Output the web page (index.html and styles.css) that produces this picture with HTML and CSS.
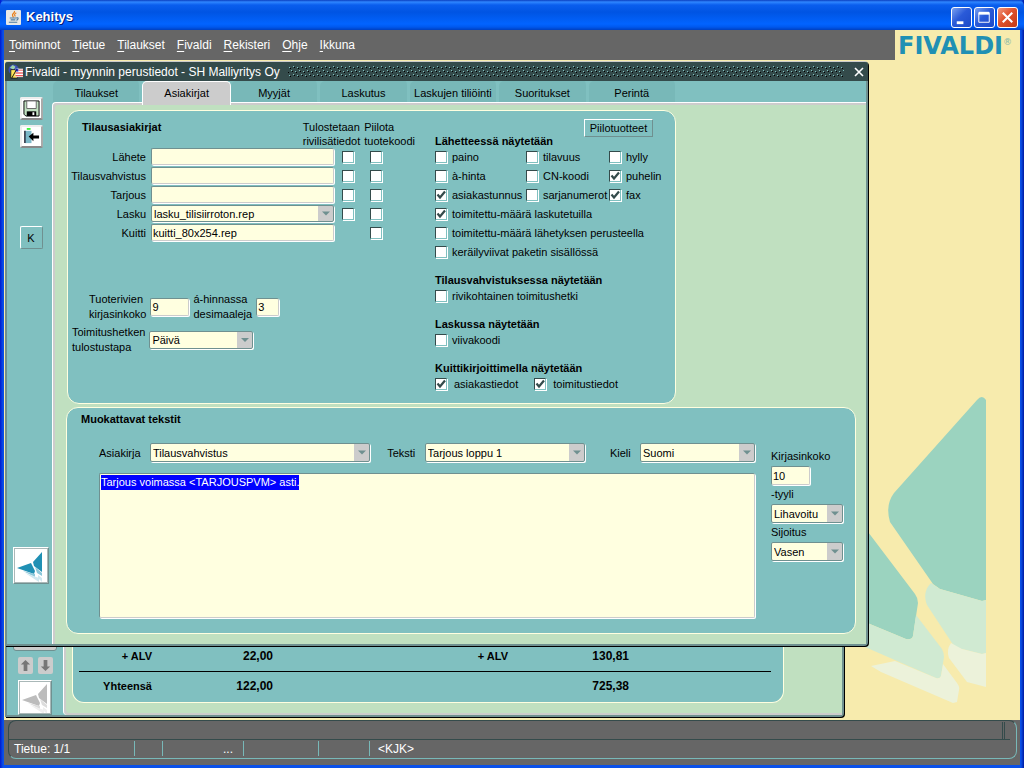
FILE: index.html
```html
<!DOCTYPE html>
<html lang="fi">
<head>
<meta charset="utf-8">
<title>Kehitys</title>
<link rel="stylesheet" href="styles.css">
</head>
<body>
<svg class="defs" aria-hidden="true">
  <symbol id="bird" viewBox="0 0 32 32">
    <path class="wing" d="M27 2v20l-8-6-1-4zM2 18l14-5 4 8-1 3z"/>
    <path class="tail" d="M20 17l7 6v3l-5-3zM8 21l12 3 0 3z"/>
    <path class="tip" d="M23 25l4 3v4l-4-4zM10 23l14 5v4z"/>
  </symbol>
</svg>
<div class="frame">
  <header class="titlebar">
    <svg class="java" viewBox="0 0 16 16" aria-hidden="true">
      <rect width="16" height="16" rx="1" fill="#e8e8e6"/>
      <path d="M9 1c1 2-3 3-2 5l1 2M11 3c-3 2-2 2-1 4" fill="none" stroke="#e8801c" stroke-width="1.3"/>
      <path d="M4 8.500h7M5 10.500h5M3 13h9M11 8.500c3-1 2 2 0 2.500" fill="none" stroke="#4a7aa0" stroke-width="1.200"/>
    </svg>
    <h1>Kehitys</h1>
    <div class="winbtns">
      <button aria-label="Pienennä"><svg viewBox="0 0 20 20"><path d="M5 14h7v3H5z" fill="#fff"/></svg></button>
      <button aria-label="Suurenna"><svg viewBox="0 0 20 20"><path d="M4 5h11v10H4z" fill="none" stroke="#fff"/><path d="M4 4h11v3H4z" fill="#fff"/></svg></button>
      <button class="close" aria-label="Sulje"><svg viewBox="0 0 20 20"><path d="M5 5l10 10M15 5L5 15" stroke="#fff" stroke-width="2.200"/></svg></button>
    </div>
  </header>

  <div class="top">
    <nav class="menu">
      <button><u>T</u>oiminnot</button>
      <button><u>T</u>ietue</button>
      <button><u>T</u>ilaukset</button>
      <button><u>F</u>ivaldi</button>
      <button><u>R</u>ekisteri</button>
      <button><u>O</u>hje</button>
      <button><u>I</u>kkuna</button>
    </nav>
    <div class="brand">FIVALDI<sup>®</sup></div>
  </div>

  <main class="desktop">
    <svg class="backdrop" viewBox="865 390 125 315" aria-hidden="true">
      <path fill="#9bd3bf" d="M986 400q-4-6-9 0L894 493q-9 12-4 29l43 62 7 5 42 12 4-1zM865 528l50 66q3 4 3 9l-5 33q-1 4-7 3l-41-17z"/>
      <path fill="#d0ead2" d="M931 583q-9 9-4 22l25 38q4 5 10 6l20 5 4-1v-53l-4 1-42-12zM865 622l41 17q6 1 7-3l3-21 26 34q2 4 2 8l-3 19q-1 3-5 2l-71-31z"/>
      <path fill="#ecf2da" d="M951 643q-5 7-2 15l18 24 19 5v-34l-4 1-20-5zM871 666l24-5 41 17q4 1 5-2l2-12 14 19q3 4 2 7l-2 12-4 1-72-31z"/>
    </svg>

    <section class="window back">
      <div class="window-body">
        <aside class="side">
          <span class="stub"></span>
          <div class="arrows">
            <button aria-label="Ylös"><svg viewBox="0 0 14 14"><path d="M7 1l5 5H9v7H5V6H2z"/></svg></button>
            <button aria-label="Alas"><svg viewBox="0 0 14 14"><path d="M7 13l5-5H9V1H5v7H2z"/></svg></button>
          </div>
          <button class="bird off" aria-label="Fivaldi"><svg><use href="#bird"/></svg></button>
        </aside>
        <div class="page">
          <div class="totals">
            <table>
              <tr><th>+ ALV</th><td>22,00</td><th>+ ALV</th><td>130,81</td></tr>
              <tr><th>Yhteensä</th><td>122,00</td><th></th><td>725,38</td></tr>
            </table>
          </div>
        </div>
      </div>
    </section>

    <section class="window main">
      <header class="window-title">
        <svg viewBox="0 0 16 16" aria-hidden="true">
          <circle cx="6" cy="6" r="5.500" fill="#3c50b4"/>
          <path d="M2 4l3-3 3 2-2 3zM8 6l3-2v4z" fill="#9fd4aa"/>
          <path d="M3 6h6l1 1v8H3z" fill="#ffe75a" stroke="#111" stroke-width=".800"/>
          <path d="M8 5h8v9H8z" fill="#fff"/>
          <path d="M11 6h5v1h-5zM8 9h8v1H8zM8 12h8v1H8z" fill="#e02020"/>
          <path d="M8 5h3v3H8z" fill="#2030c0"/>
          <path d="M9 6l-5 9" stroke="#111"/>
        </svg>
        <h2>Fivaldi - myynnin perustiedot - SH Malliyritys Oy</h2>
        <span class="grip"></span>
        <button aria-label="Sulje"><svg viewBox="0 0 10 10"><path d="M1 1l8 8M9 1L1 9" stroke="#fff" stroke-width="1.600"/></svg></button>
      </header>
      <div class="window-body">
        <aside class="side">
          <button class="tool" aria-label="Tallenna"><svg viewBox="0 0 18 18"><path d="M1 1h16v16H3l-2-2z" fill="#c0e0c0" stroke="#000"/><path d="M4 1h10v8H4z" fill="#fff" stroke="#666"/><path d="M4 12h10v5H4z" fill="#000"/><path d="M10 13h2v3h-2z" fill="#fff"/></svg></button>
          <button class="tool" aria-label="Poistu"><svg viewBox="0 0 18 18"><path d="M2 3h7v13H2z" fill="#7cb8c8"/><path d="M2 3v13" stroke="#223" stroke-width="1.500"/><path d="M4 1h4" stroke="#0e0" stroke-width="1.500"/><path d="M6 9l5-4v3h6v3h-6v3z" fill="#000"/></svg></button>
          <button class="tool flat">K</button>
          <button class="bird" aria-label="Fivaldi"><svg><use href="#bird"/></svg></button>
        </aside>
        <div class="content">
          <div class="tabs" role="tablist">
            <button role="tab">Tilaukset</button>
            <button role="tab" class="active" aria-selected="true">Asiakirjat</button>
            <button role="tab">Myyjät</button>
            <button role="tab">Laskutus</button>
            <button role="tab">Laskujen tiliöinti</button>
            <button role="tab">Suoritukset</button>
            <button role="tab">Perintä</button>
          </div>
          <div class="page">
            <form class="panel docs">
              <div class="left">
                <div class="head">
                  <h3>Tilausasiakirjat</h3>
                  <span id="h-rivi">Tulostetaan<br>rivilisätiedot</span>
                  <span id="h-koodi">Piilota<br>tuotekoodi</span>
                </div>
                <div class="rows">
                  <label for="lahete">Lähete</label><input type="text" id="lahete">
                  <input type="checkbox" aria-labelledby="h-rivi"><input type="checkbox" aria-labelledby="h-koodi">
                  <label for="vahvistus">Tilausvahvistus</label><input type="text" id="vahvistus">
                  <input type="checkbox" aria-labelledby="h-rivi"><input type="checkbox" aria-labelledby="h-koodi">
                  <label for="tarjous">Tarjous</label><input type="text" id="tarjous">
                  <input type="checkbox" aria-labelledby="h-rivi"><input type="checkbox" aria-labelledby="h-koodi">
                  <label for="lasku">Lasku</label><select id="lasku"><option>lasku_tilisiirroton.rep</option></select>
                  <input type="checkbox" aria-labelledby="h-rivi"><input type="checkbox" aria-labelledby="h-koodi">
                  <label for="kuitti">Kuitti</label><input type="text" id="kuitti" value="kuitti_80x254.rep">
                  <span></span><input type="checkbox" aria-labelledby="h-koodi">
                </div>
                <div class="extra">
                  <label for="koko">Tuoterivien<br>kirjasinkoko</label><input type="text" id="koko" class="w-m" value="9">
                  <label for="desim">á-hinnassa<br>desimaaleja</label><input type="text" id="desim" class="w-s" value="3">
                </div>
                <div class="extra">
                  <label for="tapa">Toimitushetken<br>tulostustapa</label><select id="tapa" class="w-l"><option>Päivä</option></select>
                </div>
              </div>
              <div class="right">
                <button type="button" class="hidden-products">Piilotuotteet</button>
                <fieldset>
                  <legend>Lähetteessä näytetään</legend>
                  <div class="three">
                    <label><input type="checkbox">paino</label><label><input type="checkbox">tilavuus</label><label><input type="checkbox">hylly</label>
                    <label><input type="checkbox">à-hinta</label><label><input type="checkbox">CN-koodi</label><label><input type="checkbox" checked>puhelin</label>
                    <label><input type="checkbox" checked>asiakastunnus</label><label><input type="checkbox">sarjanumerot</label><label><input type="checkbox" checked>fax</label>
                  </div>
                  <label><input type="checkbox" checked>toimitettu-määrä laskutetuilla</label>
                  <label><input type="checkbox">toimitettu-määrä lähetyksen perusteella</label>
                  <label><input type="checkbox">keräilyviivat paketin sisällössä</label>
                </fieldset>
                <fieldset>
                  <legend>Tilausvahvistuksessa näytetään</legend>
                  <label><input type="checkbox">rivikohtainen toimitushetki</label>
                </fieldset>
                <fieldset>
                  <legend>Laskussa näytetään</legend>
                  <label><input type="checkbox">viivakoodi</label>
                </fieldset>
                <fieldset>
                  <legend>Kuittikirjoittimella näytetään</legend>
                  <div class="pair">
                    <label><input type="checkbox" checked>asiakastiedot</label><label><input type="checkbox" checked>toimitustiedot</label>
                  </div>
                </fieldset>
              </div>
            </form>

            <form class="panel texts">
              <h3>Muokattavat tekstit</h3>
              <div class="editor">
                <div class="edit-main">
                  <div class="pickers">
                    <label for="asiakirja">Asiakirja</label><select id="asiakirja" class="p-a"><option>Tilausvahvistus</option></select>
                    <label for="teksti">Teksti</label><select id="teksti" class="p-b"><option>Tarjous loppu 1</option></select>
                    <label for="kieli">Kieli</label><select id="kieli" class="p-c"><option>Suomi</option></select>
                  </div>
                  <textarea id="body" aria-label="Teksti" spellcheck="false">Tarjous voimassa &lt;TARJOUSPVM&gt; asti.</textarea>
                </div>
                <div class="edit-side">
                  <label for="fkoko">Kirjasinkoko</label><input type="text" id="fkoko" class="w-m" value="10">
                  <label for="tyyli">-tyyli</label><select id="tyyli"><option>Lihavoitu</option></select>
                  <label for="sijoitus">Sijoitus</label><select id="sijoitus"><option>Vasen</option></select>
                </div>
              </div>
            </form>
          </div>
        </div>
      </div>
    </section>
  </main>

  <footer class="status">
    <div class="status-box">
      <div class="msg"><i></i></div>
      <div class="cells"><span class="c1">Tietue: 1/1</span><span class="c2"></span><span class="c3">...</span><span class="c4"></span><span class="c5"></span><span>&lt;KJK&gt;</span></div>
    </div>
  </footer>
</div>
<script src="app.js"></script>
</body>
</html>
```
FILE: app.js
```js
const body = document.getElementById('body');
body.focus();
body.select();
```
FILE: styles.css
```css
:root {
  --teal: #80c0c0;
  --tab: #78b8b8;
  --dark: #344b4b;
  --edge: #6f9090;
  --green: #c0e0c0;
  --cream: #ffffe0;
  --grey: #666;
}
* { box-sizing: border-box; }
body {
  margin: 0;
  font: 11px/14px "Liberation Sans", Arial, sans-serif;
  color: #000;
}
button, input, select, textarea { font: inherit; color: inherit; margin: 0; }
button { padding: 0; border: 0; background: none; }
h1, h2, h3 { margin: 0; font-size: 11px; }
.defs { display: none; }

.frame {
  display: flex;
  flex-direction: column;
  min-height: 100vh;
  padding: 0 4px 3px;
  background: linear-gradient(90deg, #0019cf, #0a50e8 3px, #0a50e8 calc(100% - 3px), #0019a0);
  border-bottom: 1px solid #001590;
}

/* outer title bar */
.titlebar {
  display: flex;
  align-items: center;
  height: 30px;
  margin: 0 -4px;
  padding: 4px 6px 0;
  background: linear-gradient(#0a3fc0 0, #2f86ff 2px, #0a5eee 5px, #0054e3 12px, #0264ff 24px, #0058ee 27px, #0040c0 30px);
  border-radius: 6px 6px 0 0;
}
.java { width: 15px; height: 15px; }
.titlebar h1 {
  flex: 1;
  margin-left: 5px;
  font-size: 13px;
  line-height: 18px;
  color: #fff;
  text-shadow: 1px 1px #00187a;
}
.winbtns { display: flex; gap: 2px; }
.winbtns button {
  width: 21px;
  height: 21px;
  border: 1px solid #fff;
  border-radius: 3px;
  background: linear-gradient(135deg, #7ba2f0, #2a5ad8 45%, #1c49c8);
}
.winbtns svg { display: block; width: 19px; height: 19px; }
.winbtns .close { background: linear-gradient(135deg, #f09a80, #e0512c 45%, #c23a16); }

/* menu */
.top { display: flex; height: 30px; background: var(--grey); }
.menu {
  flex: 1;
  display: flex;
  align-items: center;
  gap: 12px;
  padding-left: 5px;
  color: #fff;
  font-size: 12px;
}
.menu u { text-underline-offset: 2px; }
.brand {
  width: 125px;
  padding-left: 3px;
  background: #f7ebad;
  color: #2090b4;
  font: bold 24px/33px "DejaVu Sans", sans-serif;
  white-space: nowrap;
}
.brand sup { font-size: 9px; line-height: 9px; font-weight: normal; color: #86b9a8; }

/* desktop */
.desktop { position: relative; flex: 1; min-height: 660px; background: #f7ebad; }
.backdrop { position: absolute; right: 30px; bottom: 15px; width: 125px; height: 315px; }
.window {
  position: absolute;
  left: 1px;
  display: flex;
  flex-direction: column;
  background: var(--teal);
  border: 2px solid var(--edge);
  border-top: 0;
  border-radius: 4px 4px 4px 0;
  box-shadow: 1px 1px #000;
}
.window.main { top: 1px; right: 152px; border-top: 1px solid #ccc; }
.window.back { bottom: 3px; right: 176px; }
.window-body { flex: 1; display: flex; }

.window-title {
  display: flex;
  align-items: center;
  height: 19px;
  margin: 0 -2px;
  padding: 0 4px 0 3px;
  background: var(--dark);
  color: #fff;
  border-radius: 3px 3px 0 0;
}
.window-title > svg { width: 15px; height: 15px; }
.window-title h2 { margin: 0 8px 0 2px; font-size: 12px; font-weight: normal; white-space: nowrap; }
.grip {
  flex: 1;
  height: 11px;
  margin-right: 10px;
  background: url("data:image/svg+xml,%3Csvg xmlns='http://www.w3.org/2000/svg' width='8' height='11' shape-rendering='crispEdges'%3E%3Cpath fill='%23000' d='M6 1h1v1H6zM2 2h1v1H2zM4 5h1v1H4zM0 6h1v1H0zM6 9h1v1H6zM2 10h1v1H2z'/%3E%3Cpath fill='%2380c0c0' d='M5 0h1v1H5zM1 1h1v1H1zM3 4h1v1H3zM7 5h1v1H7zM5 8h1v1H5zM1 9h1v1H1z'/%3E%3C/svg%3E");
}
.window-title button { width: 10px; height: 10px; }
.window-title button svg { display: block; }

/* left tool strip */
.side {
  display: flex;
  flex-direction: column;
  align-items: center;
  width: 45px;
  padding: 16px 0 60px 3px;
}
.tool {
  width: 23px;
  height: 23px;
  margin-bottom: 5px;
  padding: 1px;
  background: #fff;
  border: 2px solid;
  border-color: #eee #aaa #888 #eee;
  border-radius: 2px;
}
.tool svg { display: block; width: 17px; height: 17px; }
.tool.flat { margin-top: 73px; background: var(--teal); border-width: 1px; border-color: #fff var(--edge) var(--edge) #fff; }
.bird {
  --wing: #2090b4;
  --tail: #8cc8da;
  --tip: #cfe8f0;
  width: 36px;
  height: 37px;
  margin-top: auto;
  background: #fff;
  border: 1px solid;
  border-color: #fff var(--edge) var(--edge) #fff;
  outline: 1px solid #aab8b8;
  outline-offset: -2px;
}
.bird.off { --wing: #bcbcbc; --tail: #dcdcdc; --tip: #eee; }
.bird svg { display: block; width: 32px; height: 32px; margin: 1px; }
.wing { fill: var(--wing); }
.tail { fill: var(--tail); }
.tip { fill: var(--tip); }

/* tabs */
.content { flex: 1; display: flex; flex-direction: column; min-width: 0; }
.tabs { display: flex; align-items: stretch; height: 21px; padding: 0 188px 0 1px; }
.tabs button {
  flex: 1 1 0;
  padding-top: 2px;
  white-space: nowrap;
  background: var(--tab);
  border-right: 3px solid var(--teal);
  border-radius: 5px 5px 0 0;
}
.tabs .active {
  z-index: 1;
  margin-bottom: -3px;
  background: #ccc;
  border: 1px solid #fff;
  border-width: 1px 1px 0;
  padding-bottom: 3px;
}
.page {
  flex: 1;
  padding: 5px 10px 10px 11px;
  background: var(--green);
  border: 1px solid #fff;
  border-width: 1px 0 0 1px;
  border-radius: 4px 0 0 0;
  box-shadow: inset 2px 2px #ccc;
}

/* panels */
.panel, .totals { background: var(--teal); border: 1px solid var(--cream); border-radius: 12px; }
.docs { display: flex; margin: 2px 180px 3px 3px; min-height: 294px; }
.left { flex: 0 0 367px; padding-top: 9px; }
.head { display: flex; gap: 4px; width: 347px; padding-left: 14px; white-space: nowrap; }
.head h3 { flex: 1; }
.rows {
  display: grid;
  grid-template-columns: 78px 188px 20px 28px;
  grid-auto-rows: 17px;
  row-gap: 2px;
  align-items: center;
}
.rows label { text-align: right; }
.rows > input[type="text"], .rows > select { margin-left: 5px; height: 17px; }
.rows > input[type="checkbox"] { justify-self: end; }
.extra { display: flex; align-items: center; gap: 4px; margin-top: 3px; padding-left: 4px; line-height: 15px; }
.rows + .extra { margin-top: 51px; padding-left: 21px; }

input[type="text"], select, textarea {
  border: 1px solid;
  border-color: var(--edge) #ccc #ccc var(--edge);
  border-radius: 2px;
  background: var(--cream);
  box-shadow: 1px 1px #fff;
  outline: 0;
}
input[type="text"] { height: 18px; padding: 0 1px; min-width: 0; }
select {
  appearance: none;
  height: 18px;
  padding: 0 18px 0 2px;
  border-color: var(--edge);
  background: url("data:image/svg+xml,%3Csvg xmlns='http://www.w3.org/2000/svg' width='15' height='20'%3E%3Cpath fill='%23ccc' d='M0 0h15v20H0z'/%3E%3Cpath fill='%236f9090' d='M4 8h8l-4 4z'/%3E%3C/svg%3E") right center no-repeat var(--cream);
}
.w-s { width: 23px; }
.w-m { width: 39px; }
.w-l { width: 104px; }

input[type="checkbox"] {
  appearance: none;
  flex: none;
  width: 12px;
  height: 12px;
  border: 1px solid;
  border-color: var(--dark) var(--teal) var(--teal) var(--dark);
  background: #fff;
  box-shadow: 1px 1px #fff;
}
input[type="checkbox"]:checked {
  background: #fff url("data:image/svg+xml,%3Csvg xmlns='http://www.w3.org/2000/svg' width='10' height='10'%3E%3Cpath fill='none' stroke='%23344b4b' stroke-width='2.2' d='M1.500 4.500l2.500 3L9 1.500'/%3E%3C/svg%3E") center no-repeat;
}

.right { flex: 1; padding-top: 8px; }
.hidden-products {
  display: block;
  width: 69px;
  height: 18px;
  margin: 0 22px -2px auto;
  border: 1px solid;
  border-color: #fff var(--edge) var(--edge) #fff;
  white-space: nowrap;
}
fieldset { margin: 0 0 13px; padding: 0; border: 0; min-width: 0; }
fieldset:last-child { margin-bottom: 0; }
legend { padding: 0; font-weight: bold; line-height: 12px; }
fieldset label { display: flex; align-items: center; gap: 5px; height: 19px; white-space: nowrap; }
.three { display: grid; grid-template-columns: 91px 83px 1fr; }
.pair { display: flex; gap: 16px; }
.pair label { gap: 7px; }

.texts { margin: 0 0 0 2px; padding: 4px 12px 15px 14px; }
.editor { display: flex; gap: 16px; margin-top: 17px; }
.edit-main { flex: 1; min-width: 0; padding-left: 18px; }
.pickers { display: flex; align-items: center; justify-content: space-between; }
.pickers select { height: 19px; }
.p-a { width: 220px; margin-right: 8px; }
.p-b { width: 160px; margin-right: 16px; }
.p-c { width: 115px; }
textarea {
  display: block;
  width: 100%;
  height: 145px;
  margin-top: 11px;
  padding: 1px;
  line-height: 15px;
  resize: none;
}
textarea::selection { background: rgba(0, 0, 255, .995); color: #fff; }
.edit-side { width: 72px; padding-top: 4px; display: flex; flex-direction: column; align-items: flex-start; }
.edit-side label { line-height: 19px; }
.edit-side input, .edit-side select { height: 19px; }
.edit-side select { width: 100%; }

/* background window */
.back .side { width: 56px; padding: 0; }
.back .page { padding: 0 58px 12px 8px; border-radius: 0 0 0 4px; box-shadow: inset 2px -2px #ccc; border-width: 0 0 0 1px; }
.stub { width: 44px; height: 34px; margin-top: auto; background: #ccc; border: 1px solid var(--edge); border-radius: 3px; }
.arrows { display: flex; gap: 5px; margin: 6px 0; }
.arrows button { width: 15px; height: 17px; background: #ccc; border-radius: 2px; }
.arrows svg { display: block; width: 13px; height: 15px; margin: auto; fill: #777; }
.back .bird { margin-top: 0; height: 35px; width: 34px; }
.totals { border-top: 0; border-radius: 0 0 12px 12px; padding: 30px 12px 2px 6px; }
.totals table { width: 100%; table-layout: fixed; border-collapse: collapse; font-weight: bold; }
.totals th { padding: 0; text-align: right; }
.totals th:first-child { width: 73px; }
.totals th:nth-child(3) { width: 235px; }
.totals td { width: 121px; padding: 0; text-align: right; font-size: 12px; }
.totals td:last-child { width: auto; padding-right: 142px; }
.totals tr { height: 29px; }
.totals tr + tr { border-top: 1px solid #000; }

/* status bar */
.status { padding: 0 3px 6px 4px; background: var(--grey); color: #fff; font-size: 12px; }
.status-box {
  border: 1px solid;
  border-color: var(--dark) var(--tab) var(--tab) var(--dark);
  border-radius: 8px;
}
.msg { display: flex; justify-content: flex-end; height: 19px; margin-right: 6px; border-bottom: 1px solid var(--dark); }
.msg i { width: 3px; margin: 1px 5px 0 0; border: 1px solid; border-width: 0 1px; border-color: var(--tab) var(--dark); }
.cells { display: flex; height: 18px; padding: 1px 0 2px 5px; line-height: 17px; }
.cells span { padding-right: 10px; }
.cells span:not(:last-child) { border-right: 1px solid var(--tab); }
.cells span:last-child { padding-left: 8px; }
.c1 { width: 121px; }
.c2 { width: 28px; }
.c3 { width: 81px; text-align: right; }
.c4 { width: 75px; }
.c5 { width: 51px; }
```
